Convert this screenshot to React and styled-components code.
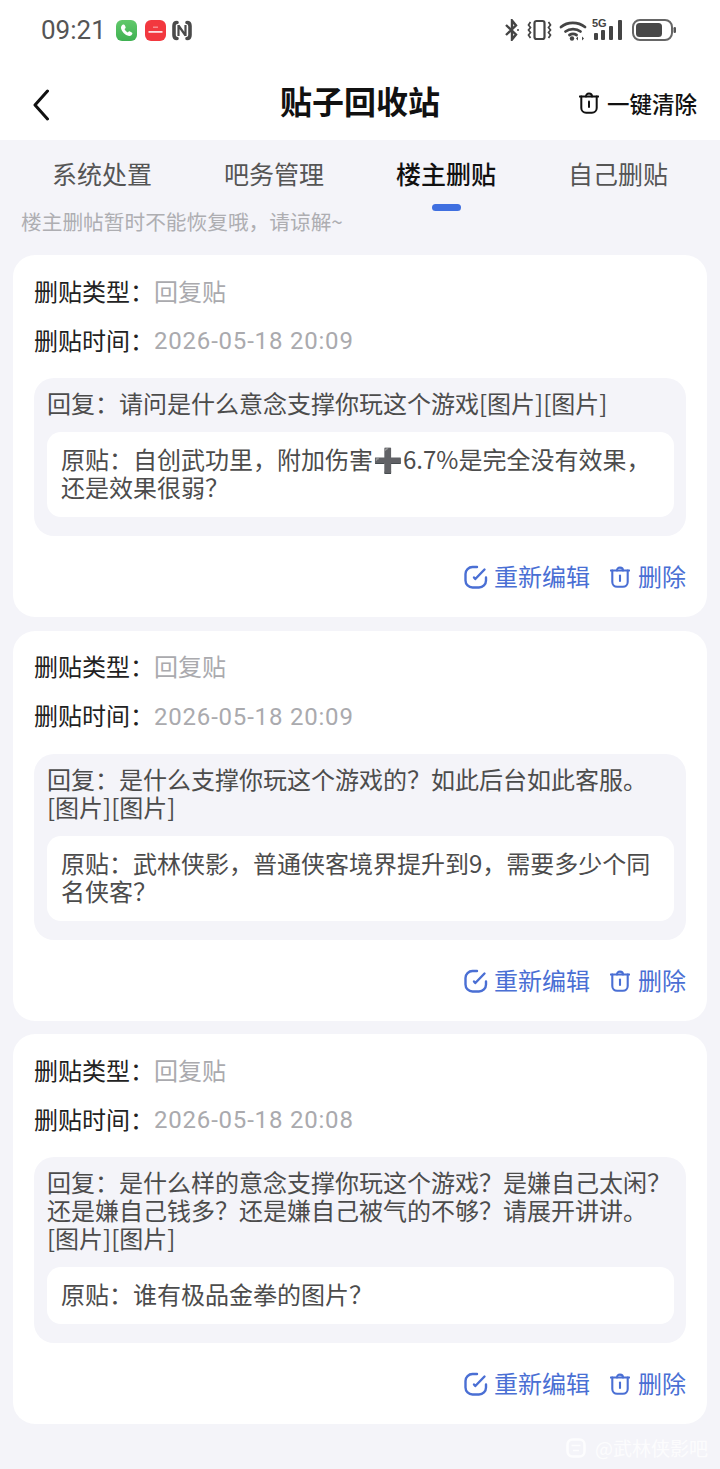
import React from 'react';
import styled, { createGlobalStyle } from 'styled-components';

const FONT = '"Noto Sans CJK SC", "Noto Sans", sans-serif';
const BLUE = '#4a6fd4';

// full-width punctuation, spelled out so it can't get swapped for the ascii one
const COLON = '\uFF1A';
const COMMA = '\uFF0C';
const ASK = '\uFF1F';

const GlobalStyle = createGlobalStyle`
    html, body {
        margin: 0;
        padding: 0;
        background: #f4f4f9;
    }
    * {
        box-sizing: border-box;
    }
`;

const tabs = ['系统处置', '吧务管理', '楼主删贴', '自己删贴'];

const posts = [
    {
        id: 1,
        time: '2026-05-18 20:09',
        reply: `回复${COLON}请问是什么意念支撑你玩这个游戏`,
        origin: `原贴${COLON}自创武功里${COMMA}附加伤害➕6.7%是完全没有效果${COMMA}还是效果很弱${ASK}`,
    },
    {
        id: 2,
        time: '2026-05-18 20:09',
        reply: `回复${COLON}是什么支撑你玩这个游戏的${ASK}如此后台如此客服。`,
        origin: `原贴${COLON}武林侠影${COMMA}普通侠客境界提升到9${COMMA}需要多少个同名侠客${ASK}`,
    },
    {
        id: 3,
        time: '2026-05-18 20:08',
        reply: `回复${COLON}是什么样的意念支撑你玩这个游戏${ASK}是嫌自己太闲${ASK}还是嫌自己钱多${ASK}还是嫌自己被气的不够${ASK}请展开讲讲。`,
        origin: `原贴${COLON}谁有极品金拳的图片${ASK}`,
    },
];

function TrashIcon({ color = BLUE, w = 20, h = 22, stroke = 2.1 }) {
    return (
        <svg width={w} height={h} viewBox="0 0 20 22" fill="none" stroke={color} strokeWidth={stroke} strokeLinecap="round" strokeLinejoin="round">
            <path d="M0.800 4.500h18.400" />
            <path d="M7 4.500c0-1.800 1-2.900 3-2.900s3 1.100 3 2.900" />
            <path d="M2.300 4.500v11.500a4.800 4.800 0 0 0 4.800 4.800h5.800a4.800 4.800 0 0 0 4.800-4.800V4.500" />
            <path d="M10 9.500v5.500" />
        </svg>
    );
}

function EditIcon() {
    return (
        <svg width="24" height="24" viewBox="0 0 24 24" fill="none" stroke={BLUE} strokeWidth="2.400" strokeLinecap="round" strokeLinejoin="round">
            <path d="M13 2H8.500A7 7 0 0 0 1.500 9v6.500a7 7 0 0 0 7 7H15a7 7 0 0 0 7-7V12.500" />
            <path d="M10 12.500l1.300 1.500L20.500 4.500" />
        </svg>
    );
}

function StatusBar() {
    return (
        <StatusRow>
            <StatusGroup>
                <Clock>09:21</Clock>
                <AppBadge $bg="linear-gradient(#62c96b, #3fb152)">
                    <svg width="15" height="15" viewBox="0 0 24 24" fill="#fff">
                        <path d="M6.500 2.500c1-.5 2-.2 2.500.8l1.500 3c.4.800.2 1.700-.5 2.300l-1.200 1c1 2.400 2.800 4.400 5.300 5.700l1.100-1.200c.6-.7 1.500-.9 2.300-.5l2.900 1.500c1 .5 1.300 1.600.8 2.500-1 2-2.800 3.500-5 3.200C9.500 19.500 4 13.500 3.200 8c-.3-2.200 1.300-4.500 3.300-5.500z" />
                    </svg>
                </AppBadge>
                <AppBadge $bg="#f2383f">
                    <svg width="17" height="8" viewBox="0 0 17 8">
                        <rect x="1.500" y="5" width="14" height="1.800" fill="#fff" opacity="0.85" />
                        <rect x="6" y="0.500" width="5" height="1.400" fill="#fff" opacity="0.45" />
                    </svg>
                </AppBadge>
                <NfcIcon width="20" height="21" viewBox="0 0 20 21" fill="none" stroke="#4a4a4a">
                    <path d="M5 2.500C3 2.500 2 3.500 2 6v9c0 2.500 1 3.500 3 3.500" strokeWidth="3.600" strokeLinecap="round" />
                    <path d="M15 2.500c2 0 3 1 3 3.500v9c0 2.500-1 3.500-3 3.500" strokeWidth="3.600" strokeLinecap="round" />
                    <path d="M6.500 5v11M13.500 5v11M6.500 5.500l7 10" strokeWidth="2.200" />
                </NfcIcon>
            </StatusGroup>
            <StatusGroup>
                <svg width="16" height="22" viewBox="0 0 16 22" fill="none" stroke="#444" strokeWidth="2.400">
                    <path d="M2 6l10 9.500-4 5V1.500l4 5L2 16" />
                    <circle cx="14" cy="11" r="1" fill="#444" stroke="none" />
                </svg>
                <svg width="25" height="22" viewBox="0 0 25 22" fill="none" stroke="#444" strokeWidth="2.200">
                    <rect x="7.500" y="2" width="10" height="18" rx="2" />
                    <path d="M3.500 3 1.500 6l2 2.500-2 2.500 2 2.500-2 2.500 2 3M21.500 3l2 3-2 2.500 2 2.500-2 2.500 2 2.500-2 3" strokeWidth="1.700" />
                </svg>
                <svg width="28" height="22" viewBox="0 0 28 22" fill="none" stroke="#444" strokeWidth="2.800" strokeLinecap="round">
                    <path d="M2 8c6.500-5.500 17-5.500 24 0" />
                    <path d="M6.500 12.500c4-3.200 11-3.200 15 0" />
                    <path d="M10.500 16c2-1.300 5-1.300 7 0" />
                    <circle cx="13" cy="19.500" r="2.200" fill="#444" stroke="none" />
                    <path d="M19 17.500v4l-2-2zM23 17.500v4l2-2z" fill="#444" stroke="none" />
                </svg>
                <SignalBox>
                    <FiveG>5G</FiveG>
                    <svg width="32" height="22" viewBox="0 0 32 22" fill="#444">
                        <rect x="2" y="14" width="4" height="7" rx="1" />
                        <rect x="9" y="11" width="4" height="10" rx="1" />
                        <rect x="17" y="7" width="4" height="14" rx="1" />
                        <rect x="26" y="1" width="4" height="20" rx="1" />
                    </svg>
                </SignalBox>
                <svg width="45" height="24" viewBox="0 0 45 24">
                    <rect x="2" y="2" width="39" height="20" rx="7" fill="none" stroke="#666" strokeWidth="2" />
                    <rect x="5" y="5" width="26" height="14" rx="3.500" fill="#484848" />
                    <rect x="42.500" y="9" width="2.500" height="6" rx="1.200" fill="#555" />
                </svg>
            </StatusGroup>
        </StatusRow>
    );
}

function PostCard({ time, reply, origin }) {
    return (
        <Card>
            <InfoRow>
                <InfoLabel>删贴类型{COLON}</InfoLabel>
                <InfoValue>回复贴</InfoValue>
            </InfoRow>
            <InfoRow>
                <InfoLabel>删贴时间{COLON}</InfoLabel>
                <InfoValue $time>{time}</InfoValue>
            </InfoRow>
            <ReplyBox>
                <ReplyText>
                    {reply}
                    <Attachment>[图片][图片]</Attachment>
                </ReplyText>
                <OriginBox>{origin}</OriginBox>
            </ReplyBox>
            <Actions>
                <ActionButton $gap={6}>
                    <EditIcon />
                    <ActionLabel>重新编辑</ActionLabel>
                </ActionButton>
                <ActionButton $gap={8}>
                    <TrashIcon />
                    <ActionLabel>删除</ActionLabel>
                </ActionButton>
            </Actions>
        </Card>
    );
}

export default function App() {
    return (
        <Page>
            <GlobalStyle />
            <Top>
                <StatusBar />
                <Header>
                    <BackButton>
                        <svg width="16" height="32" viewBox="0 0 16 32" fill="none" stroke="#111" strokeWidth="3" strokeLinecap="round" strokeLinejoin="round">
                            <path d="M14.500 2 2 16l12.500 14" />
                        </svg>
                    </BackButton>
                    <Title>贴子回收站</Title>
                    <ClearButton>
                        <TrashIcon color="#111" stroke={2} />
                        一键清除
                    </ClearButton>
                </Header>
            </Top>
            <Tabs>
                {tabs.map((tab) => (
                    <Tab key={tab} $active={tab === '楼主删贴'}>
                        {tab}
                    </Tab>
                ))}
            </Tabs>
            <Notice>楼主删帖暂时不能恢复哦{COMMA}请谅解~</Notice>
            <CardList>
                {posts.map((post) => (
                    <PostCard key={post.id} {...post} />
                ))}
            </CardList>
            <Watermark>
                <svg width="20" height="20" viewBox="0 0 20 20" fill="none" stroke="rgba(255,255,255,0.8)" strokeWidth="2.500">
                    <rect x="1.500" y="1.500" width="17" height="17" rx="5" />
                    <path d="M5.500 7.500h9M7 12.500h6" strokeWidth="1.500" />
                </svg>
                @武林侠影吧
            </Watermark>
        </Page>
    );
}

const Page = styled.div`
    position: relative;
    width: 720px;
    height: 1469px;
    overflow: hidden;
    background: #f4f4f9;
    font-family: ${FONT};
`;

const Top = styled.div`
    background: #fff;
    height: 140px;
`;

const StatusRow = styled.div`
    height: 62px;
    display: flex;
    align-items: center;
    justify-content: space-between;
    padding: 0 44px 2px 41px;
`;

const StatusGroup = styled.div`
    display: flex;
    align-items: center;
    gap: 7px;
`;

const Clock = styled.span`
    font-family: Roboto, sans-serif;
    font-size: 26px;
    color: #555;
    margin-right: 3px;
`;

const AppBadge = styled.span`
    width: 21px;
    height: 21px;
    border-radius: 6px;
    background: ${(p) => p.$bg};
    display: inline-flex;
    align-items: center;
    justify-content: center;
    margin-right: 1px;
`;

const NfcIcon = styled.svg`
    margin-left: -2px;
`;

const SignalBox = styled.span`
    position: relative;
    display: inline-flex;
    margin-left: -2px;
`;

const FiveG = styled.span`
    position: absolute;
    left: 0;
    top: -2px;
    font-family: "Liberation Sans", sans-serif;
    font-size: 11px;
    font-weight: 700;
    line-height: 12px;
    color: #444;
`;

const Header = styled.div`
    height: 78px;
    display: grid;
    grid-template-columns: 1fr auto 1fr;
    align-items: center;
    padding: 0 23px;
`;

const BackButton = styled.div`
    display: flex;
    align-items: center;
    margin-left: 10px;
    padding-top: 8px;
`;

const Title = styled.h1`
    margin: 0;
    padding-bottom: 2px;
    font-size: 32px;
    font-weight: 700;
    color: #111;
`;

const ClearButton = styled.div`
    justify-self: end;
    display: flex;
    align-items: center;
    gap: 8px;
    padding-top: 4px;
    font-size: 22.500px;
    font-weight: 500;
    color: #111;
`;

const Tabs = styled.div`
    display: grid;
    grid-template-columns: repeat(4, 1fr);
    padding: 0 16px;
    height: 72px;
`;

const Tab = styled.div`
    position: relative;
    text-align: center;
    padding-top: 14px;
    font-size: 25px;
    line-height: 38px;
    font-weight: ${(p) => (p.$active ? 500 : 400)};
    color: ${(p) => (p.$active ? '#111' : '#555')};

    &::after {
        content: '';
        display: ${(p) => (p.$active ? 'block' : 'none')};
        position: absolute;
        left: 50%;
        top: 64px;
        width: 29px;
        height: 7px;
        margin-left: -14.500px;
        border-radius: 4px;
        background: #3f6fe0;
    }
`;

const Notice = styled.div`
    margin-top: -3px;
    height: 46px;
    padding: 0 0 0 21px;
    font-size: 20.700px;
    line-height: 24px;
    color: #aeaeb2;
`;

const CardList = styled.div`
    display: flex;
    flex-direction: column;
    gap: 13.500px;
    padding: 0 13px;
`;

const Card = styled.div`
    background: #fff;
    border-radius: 22px;
    padding: 21px 21px 26px;
`;

const InfoRow = styled.div`
    display: flex;
    align-items: center;
    height: 28px;
    margin-bottom: 21px;
    font-size: 24px;

    &:nth-child(2) {
        margin-bottom: 25px;
    }
`;

const InfoLabel = styled.span`
    color: #222;
    width: 120px;
`;

const InfoValue = styled.span`
    color: #aaaaae;
    font-family: ${(p) => (p.$time ? 'Roboto, sans-serif' : 'inherit')};
    letter-spacing: ${(p) => (p.$time ? '0.800px' : '0')};
    padding-top: ${(p) => (p.$time ? '4px' : '0')};
`;

const ReplyBox = styled.div`
    background: #f4f4f9;
    border-radius: 20px;
    padding: 11px 12px 19px 13px;
`;

const ReplyText = styled.div`
    font-size: 24px;
    line-height: 28px;
    color: #4c4c4c;
`;

const Attachment = styled.span`
    display: inline-block;
    white-space: nowrap;
`;

const OriginBox = styled.div`
    margin-top: 15px;
    background: #fff;
    border-radius: 14px;
    padding: 13px 14px 16px 14px;
    font-size: 24px;
    line-height: 28px;
    color: #4c4c4c;
`;

const Actions = styled.div`
    display: flex;
    justify-content: flex-end;
    gap: 20px;
    margin-top: 27px;
    height: 28px;
`;

const ActionButton = styled.div`
    display: flex;
    align-items: center;
    gap: ${(p) => p.$gap}px;
    font-size: 24px;
    line-height: 28px;
    color: ${BLUE};
`;

const ActionLabel = styled.span`
    padding-bottom: 2px;
`;

const Watermark = styled.div`
    position: absolute;
    right: 12px;
    bottom: 8px;
    display: flex;
    align-items: center;
    gap: 9px;
    font-size: 19px;
    color: rgba(255, 255, 255, 0.8);
`;
